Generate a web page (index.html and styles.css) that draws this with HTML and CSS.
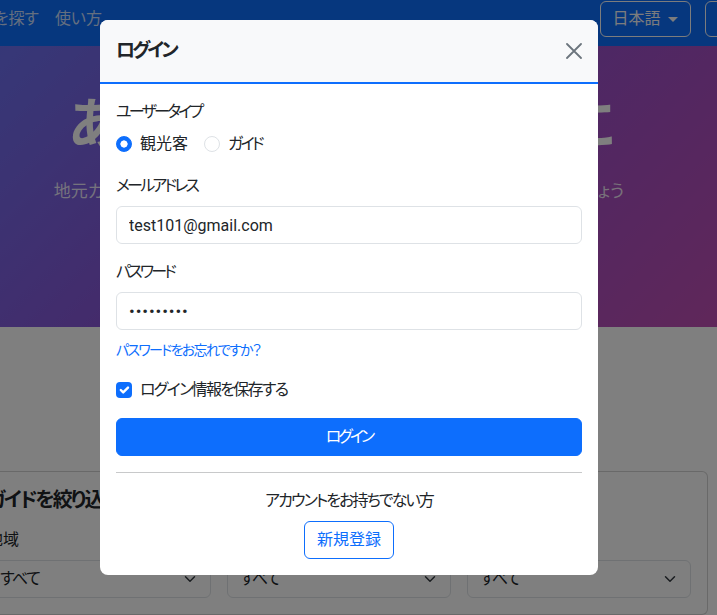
FILE: index.html
```html
<!DOCTYPE html>
<html lang="ja">
<head>
<meta charset="utf-8">
<title>ログイン</title>
<link rel="stylesheet" href="styles.css">
</head>
<body>
<div class="page">
  <header class="navbar">
    <nav class="nav-links">
      <a class="nav-link" href="#">ガイドを探す</a>
      <a class="nav-link" href="#">使い方</a>
    </nav>
    <div class="nav-right">
      <button class="btn-nav" type="button">日本語<span class="caret"></span></button>
      <button class="btn-nav" type="button">ログイン</button>
    </div>
  </header>

  <section class="hero">
    <h1>あなただけの旅を特別に</h1>
    <p>地元ガイドと一緒に、ガイドブックには載っていない特別な体験をしてみましょう</p>
  </section>

  <section class="filters">
    <div class="filter-card">
      <h5 class="filter-title">ガイドを絞り込む</h5>
      <div class="filter-grid">
        <div class="field">
          <label>地域</label>
          <div class="select"><span class="select-text">すべて</span><svg class="chev" viewBox="0 0 16 16" width="16" height="12"><path d="M2 5l6 6 6-6" fill="none" stroke="#343a40" stroke-width="2" stroke-linecap="round" stroke-linejoin="round"/></svg></div>
        </div>
        <div class="field">
          <label>言語</label>
          <div class="select"><span class="select-text">すべて</span><svg class="chev" viewBox="0 0 16 16" width="16" height="12"><path d="M2 5l6 6 6-6" fill="none" stroke="#343a40" stroke-width="2" stroke-linecap="round" stroke-linejoin="round"/></svg></div>
        </div>
        <div class="field">
          <label>カテゴリー</label>
          <div class="select"><span class="select-text">すべて</span><svg class="chev" viewBox="0 0 16 16" width="16" height="12"><path d="M2 5l6 6 6-6" fill="none" stroke="#343a40" stroke-width="2" stroke-linecap="round" stroke-linejoin="round"/></svg></div>
        </div>
      </div>
    </div>
  </section>
</div>

<div class="backdrop"></div>

<div class="modal" role="dialog" aria-labelledby="loginTitle">
  <div class="modal-header">
    <h5 class="modal-title" id="loginTitle">ログイン</h5>
    <button class="btn-close" type="button" aria-label="閉じる">
      <svg viewBox="0 0 16 16" width="16" height="16"><path d="M1 1l14 14M15 1L1 15" stroke="#6c757d" stroke-width="1.8" stroke-linecap="round"/></svg>
    </button>
  </div>
  <div class="modal-body">
    <div class="form-label">ユーザータイプ</div>
    <div class="radio-row">
      <label class="radio-opt"><span class="radio checked"></span>観光客</label>
      <label class="radio-opt kana"><span class="radio"></span>ガイド</label>
    </div>

    <label class="form-label" for="email">メールアドレス</label>
    <input class="form-control" id="email" type="email" value="test101@gmail.com">

    <label class="form-label" for="pw">パスワード</label>
    <input class="form-control pw" id="pw" type="password" value="password1">

    <div class="forgot"><a href="#">パスワードをお忘れですか？</a></div>

    <label class="check-row"><span class="checkbox"><svg viewBox="0 0 20 20" width="16" height="16"><path d="M6 10l3 3 6-6" fill="none" stroke="#fff" stroke-width="3" stroke-linecap="round" stroke-linejoin="round"/></svg></span>ログイン情報を保存する</label>

    <button class="btn-primary" type="button">ログイン</button>

    <hr class="divider">

    <div class="signup">
      <p>アカウントをお持ちでない方</p>
      <button class="btn-outline" type="button">新規登録</button>
    </div>
  </div>
</div>
</body>
</html>
```

FILE: styles.css
```css
* { box-sizing: border-box; }

html, body {
  margin: 0;
  height: 100%;
}

body {
  font-family: "Segoe UI", Roboto, "Noto Sans CJK JP", sans-serif;
  font-size: 16px;
  line-height: 1.5;
  color: #212529;
  background: #fff;
  overflow: hidden;
  font-feature-settings: "palt" 1;
}

.page {
  width: 756px;
  margin-left: -39px;
}

/* navbar */
.navbar {
  display: flex;
  align-items: center;
  height: 46px;
  padding: 1px 0 9px;
  background: #0d6efd;
}

.nav-links {
  width: 149px;
  flex-shrink: 0;
  display: flex;
  justify-content: flex-end;
}

.nav-link {
  flex-shrink: 0;
  padding: 0 8px;
  color: rgba(255, 255, 255, 0.78);
  text-decoration: none;
  white-space: nowrap;
}

.nav-right {
  display: flex;
  gap: 14px;
  flex-shrink: 0;
  margin-left: auto;
  margin-right: -72px;
}

.btn-nav {
  display: inline-flex;
  align-items: center;
  height: 36px;
  padding: 5px 12px;
  border: 1px solid #f8f9fa;
  border-radius: 6px;
  background: transparent;
  color: #f8f9fa;
  font: inherit;
  white-space: nowrap;
}

.caret {
  margin-left: 7px;
  border-top: 5px solid;
  border-left: 5px solid transparent;
  border-right: 5px solid transparent;
}

/* hero */
.hero {
  height: 281px;
  padding-top: 46px;
  text-align: center;
  color: #fff;
  background: linear-gradient(135deg, #6a72f2 0%, #9050d0 50%, #c04eb4 100%);
}

.hero h1 {
  margin: 0 0 20px;
  font-size: 56px;
  font-weight: 700;
  line-height: 1.2;
  letter-spacing: -5.5px;
}

.hero p {
  margin: 0;
  font-size: 17px;
  color: rgba(255, 255, 255, 0.85);
}

/* filters */
.filters {
  padding-top: 144px;
}

.filter-card {
  width: 738px;
  margin: 0 auto;
  padding: 16px;
  border: 1px solid rgba(0, 0, 0, 0.175);
  border-radius: 6px;
  background: #fff;
}

.filter-title {
  margin: 0 0 16px;
  font-size: 20px;
  font-weight: 700;
  line-height: 1.2;
  letter-spacing: -2px;
}

.filter-grid {
  display: grid;
  grid-template-columns: repeat(3, 1fr);
  gap: 16px;
}

.field label {
  display: block;
  margin-bottom: 8px;
}

.select {
  display: flex;
  align-items: center;
  justify-content: space-between;
  height: 38px;
  padding: 6px 12px;
  border: 1px solid #dee2e6;
  border-radius: 6px;
}

.select-text {
  letter-spacing: -1.5px;
}

/* modal */
.backdrop {
  position: fixed;
  inset: 0;
  background: rgba(0, 0, 0, 0.5);
}

.modal {
  position: fixed;
  top: 20px;
  left: 100px;
  width: 498px;
  background: #fff;
  border-radius: 8px;
  overflow: hidden;
}

.modal-header {
  display: flex;
  align-items: center;
  justify-content: space-between;
  padding: 16px;
  background: #f8f9fa;
  border-bottom: 2px solid #0d6efd;
}

.modal-title {
  margin: 0;
  font-size: 19px;
  font-weight: 700;
  line-height: 30px;
  letter-spacing: -3px;
}

.btn-close {
  display: flex;
  width: 16px;
  height: 16px;
  padding: 0;
  border: 0;
  background: none;
}

.modal-body {
  padding: 16px;
}

.form-label {
  display: block;
  margin-bottom: 8px;
  letter-spacing: -2.8px;
}

.radio-row {
  display: flex;
  gap: 16px;
  margin-bottom: 18px;
}

.radio-opt {
  display: flex;
  align-items: center;
  gap: 8px;
}

.radio-opt.kana {
  letter-spacing: -2.7px;
}

.radio {
  width: 16px;
  height: 16px;
  border: 1px solid #dee2e6;
  border-radius: 50%;
  background: #fff;
}

.radio.checked {
  border-color: #0d6efd;
  background: radial-gradient(circle, #fff 0 3.3px, #0d6efd 3.9px);
}

.form-control {
  display: block;
  width: 100%;
  height: 38px;
  margin: 0 0 16px;
  padding: 6px 12px;
  border: 1px solid #dee2e6;
  border-radius: 6px;
  font: inherit;
  color: #212529;
  background: #fff;
}

.form-control.pw {
  margin-bottom: 8px;
  font-size: 17px;
  letter-spacing: 0.9px;
}

.forgot {
  margin-bottom: 16px;
  font-size: 14px;
  line-height: 24px;
  letter-spacing: -1.7px;
}

.forgot a {
  color: #0d6efd;
  text-decoration: none;
}

.check-row {
  display: flex;
  align-items: center;
  gap: 8px;
  margin-bottom: 16px;
  letter-spacing: -1.7px;
}

.checkbox {
  display: flex;
  width: 16px;
  height: 16px;
  border-radius: 4px;
  background: #0d6efd;
}

.btn-primary {
  display: block;
  width: 100%;
  height: 38px;
  padding: 6px 12px;
  border: 1px solid #0d6efd;
  border-radius: 6px;
  background: #0d6efd;
  color: #fff;
  font: inherit;
  letter-spacing: -3px;
}

.divider {
  margin: 16px 0;
  border: 0;
  border-top: 1px solid #c8c9ca;
}

.signup {
  text-align: center;
}

.signup p {
  margin: 0 0 8px;
  letter-spacing: -1.9px;
}

.btn-outline {
  height: 38px;
  padding: 6px 12px;
  border: 1px solid #0d6efd;
  border-radius: 6px;
  background: #fff;
  color: #0d6efd;
  font: inherit;
}
```
